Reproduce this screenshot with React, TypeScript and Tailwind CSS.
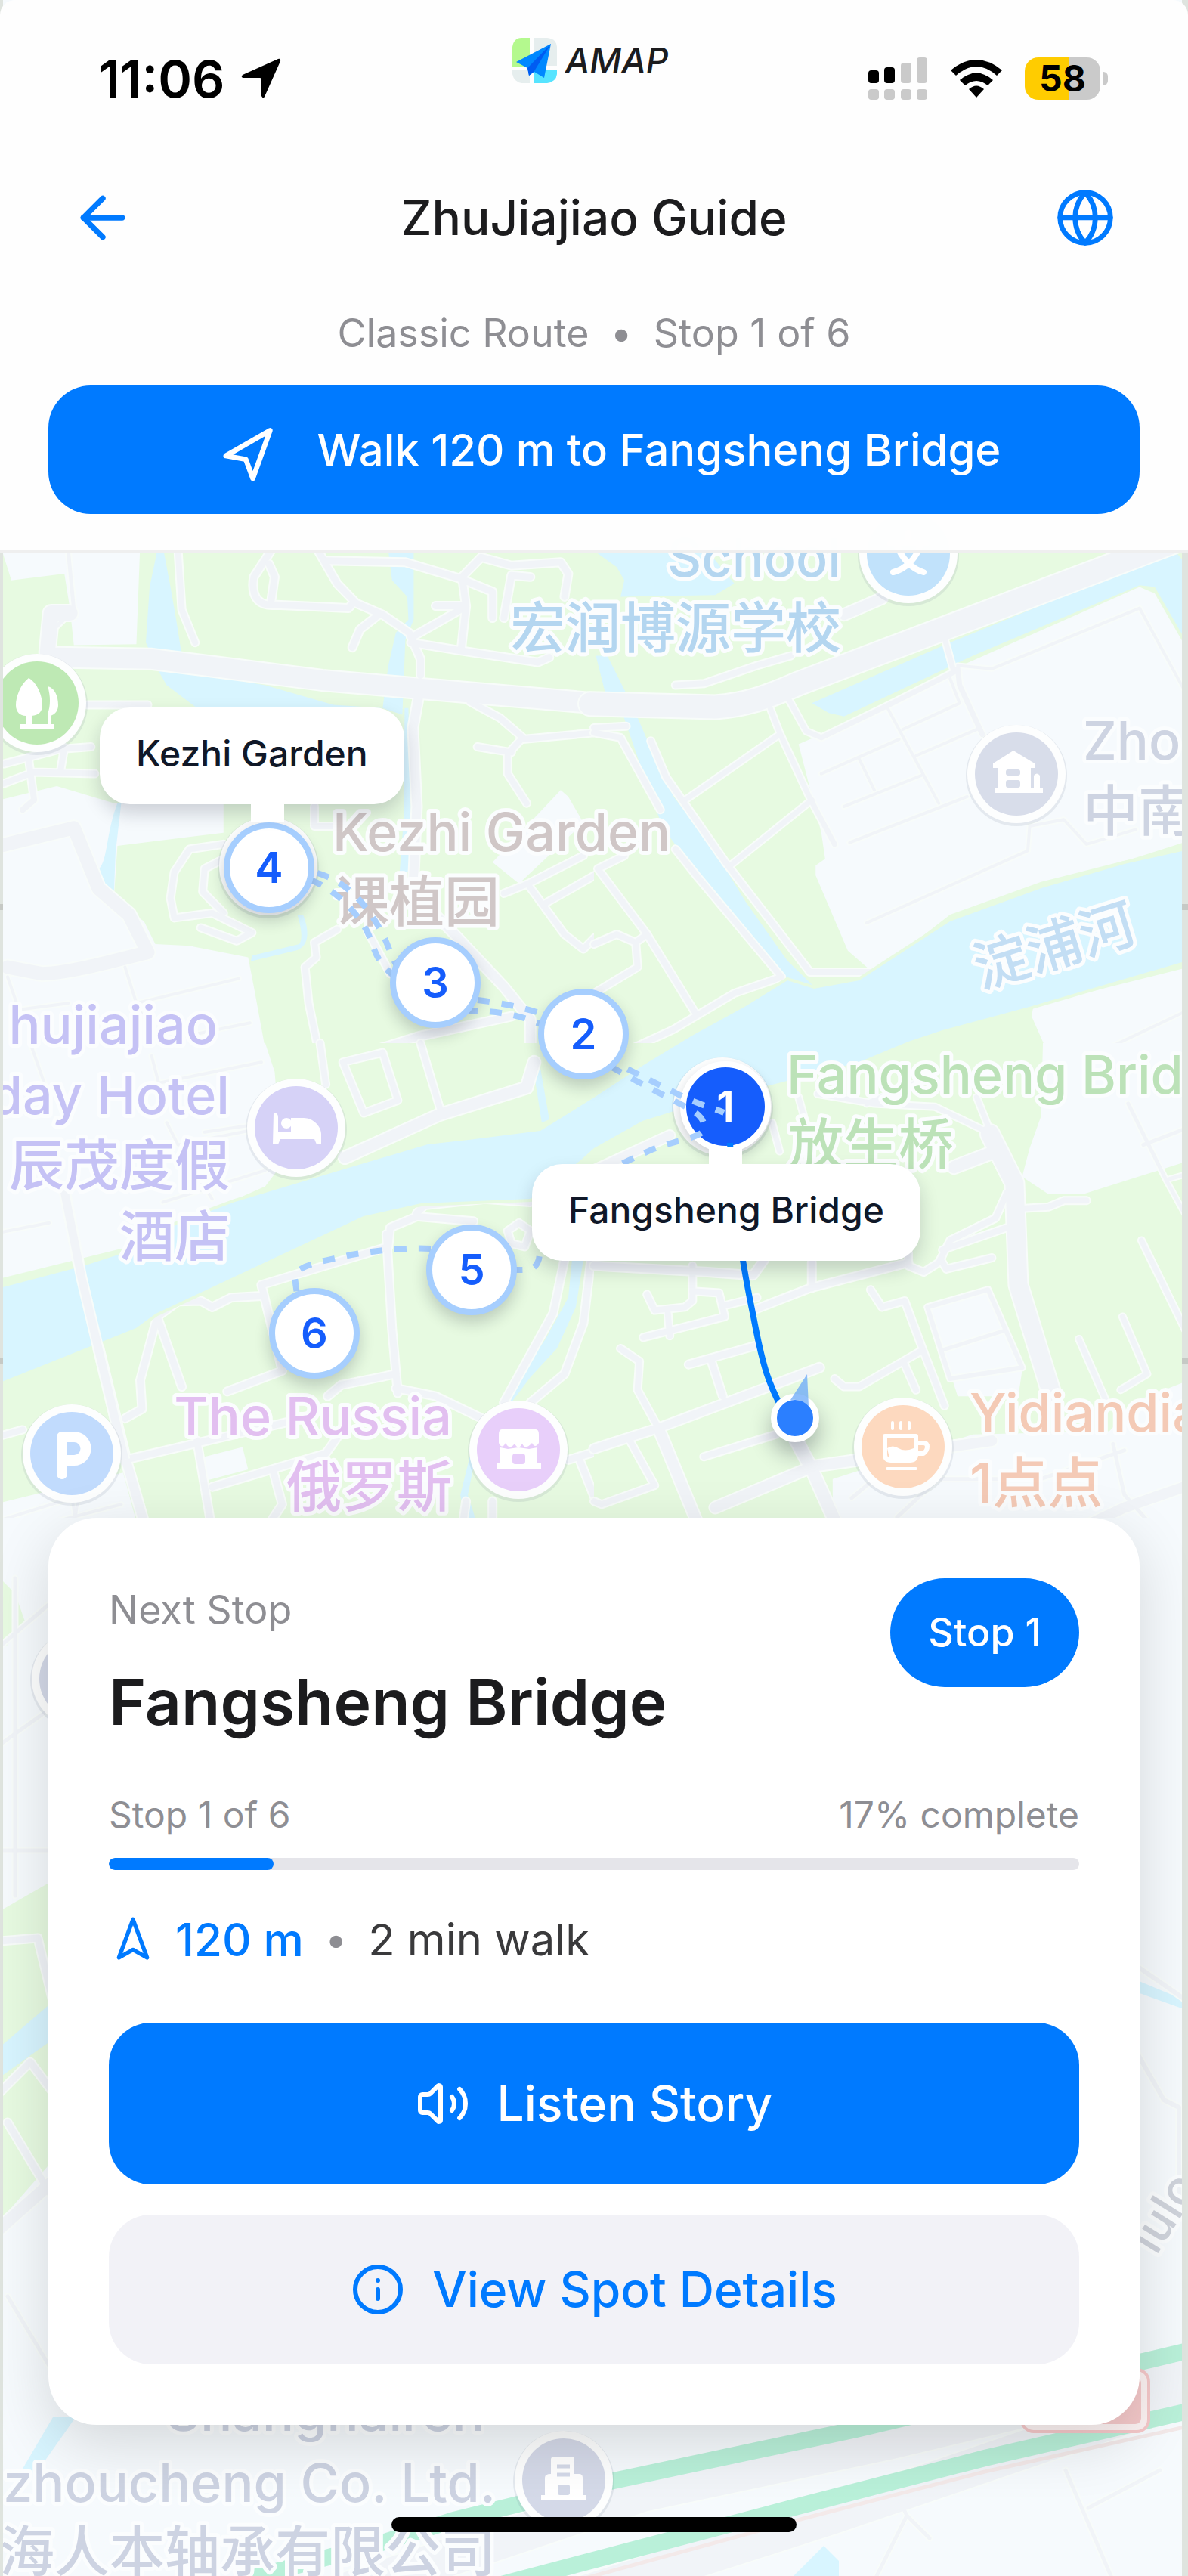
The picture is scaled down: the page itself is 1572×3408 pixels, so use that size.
import { ArrowLeft, Globe, Info, Navigation2, Volume2 } from "lucide-react";
import type { ReactNode } from "react";

type Area = { d: string; fill: string };
type Road = { d: string; w: number };
type Tile = { transform: string; areas: Area[]; roads: Road[] };

const GREEN = "#e7fae1";
const LAND = "#f6fafd";
const WATER = "#d8f5ff";
const ROAD = "#f1f4f8";
const CASING = "#f8fcfa";

const tiles: Tile[] = [
  {
    transform: "translate(0 720) scale(0.5013 0.4337)",
    areas: [
      { d: "M0 0H1570V1570H0Z", fill: GREEN },
      { d: "M0 0H370L360 305L195 308L185 200L170 90L30 110Z", fill: LAND },
      { d: "M0 780L150 738L300 790H590V880L310 920L300 1090L380 1150L410 1220L500 1225L655 1260L670 1350L705 1570H0Z", fill: LAND },
      { d: "M1300 970L1480 750L1500 770L1540 850L1370 1035Z", fill: LAND },
      { d: "M415 20H432L450 130L465 230L478 325L545 400L700 430L880 490L1010 500L520 500L440 430L420 390L385 300L395 130Z", fill: WATER },
      { d: "M1025 20H1092V230L1070 290L1062 520L1010 500L1025 370L1045 270L1078 230L1075 160L1035 110Z", fill: WATER },
      { d: "M1068 500H1078L1085 830L1080 1000H1055L1066 830Z", fill: WATER },
      { d: "M310 790C280 880 285 960 262 990L290 1090H300L305 940L320 790Z", fill: WATER },
      { d: "M785 1130L800 1130C820 1190 812 1225 785 1238L662 1272L665 1255L790 1220C802 1200 792 1160 785 1130Z", fill: WATER },
      { d: "M1170 1175L1190 1180L1350 1370L1410 1450L1425 1570H1395L1390 1450L1330 1370Z", fill: WATER },
    ],
    roads: [
      { d: "M150 345L400 350L540 370L850 415L1570 485", w: 26 },
      { d: "M125 330L135 210L185 210", w: 20 },
      { d: "M0 920L195 865L260 1050L340 1130L390 1245C300 1270 180 1310 110 1310L20 1290", w: 18 },
      { d: "M180 20L195 200L150 250", w: 5 },
      { d: "M470 20L480 200L515 300", w: 8 },
      { d: "M715 20L670 100C660 170 690 190 730 185L920 195L935 175", w: 9 },
      { d: "M710 60L725 100L715 180", w: 9 },
      { d: "M840 20L890 120L940 180L1010 215L1080 270L1110 350V400", w: 9 },
      { d: "M860 50L1070 55L1215 105L1300 145V225", w: 9 },
      { d: "M1000 215L950 260L930 315", w: 9 },
      { d: "M1215 105L1270 40L1350 65L1480 55L1500 90L1490 160", w: 9 },
      { d: "M1400 100L1350 95L1330 225", w: 9 },
      { d: "M1220 100L1230 190L1085 285", w: 9 },
      { d: "M1150 188H1230L1218 315", w: 9 },
      { d: "M1085 300L1218 325L1420 360L1450 345", w: 9 },
      { d: "M1105 465L1090 560L1100 800L1090 1060L1200 1190L1330 1350L1400 1450V1570", w: 12 },
      { d: "M1240 480L1320 530L1380 590L1340 640V700L1390 790", w: 8 },
      { d: "M1260 618L1350 635M1380 595L1568 575", w: 8 },
      { d: "M1330 1065L1395 1035L1540 950", w: 8 },
      { d: "M1395 1040L1490 1190L1540 1235L1570 1200", w: 8 },
      { d: "M1440 1095L1570 1010", w: 8 },
      { d: "M230 490H390M10 670L160 625L240 618", w: 8 },
      { d: "M10 730L90 695L250 700M75 650L90 780L60 810M170 620L160 690", w: 8 },
      { d: "M590 915L500 930L460 1000L450 1080L460 1140L560 1125L665 1185L625 1210L530 1170", w: 8 },
      { d: "M590 960L540 990L535 1060L590 1125", w: 8 },
      { d: "M830 800V860H900", w: 8 },
      { d: "M890 1175L830 1215L835 1260L805 1290L815 1400L845 1570", w: 8 },
      { d: "M920 1568L1110 1500L1350 1440", w: 10 },
      { d: "M20 1320L50 1420L180 1400M330 1290L360 1400L630 1325M360 1400L410 1520L660 1460", w: 4 },
      { d: "M970 1180L1030 1310", w: 8 },
    ],
  },
  {
    transform: "translate(786 720) scale(0.5013 0.4337)",
    areas: [
      { d: "M0 0H1570V1570H0Z", fill: GREEN },
      { d: "M1440 130L1480 150L1570 330V905L1420 960L1180 1030L940 1130L740 1310L670 1240L585 1010V980L610 960L600 880L540 610L600 580L800 480L950 380Z", fill: LAND },
      { d: "M1570 1290L1160 1408L1155 1440L1205 1570H1570Z", fill: LAND },
      { d: "M575 485L940 300L1500 35L1540 30L1570 70V310L1480 130L1440 125L1000 340L660 525L620 515Z", fill: WATER },
      { d: "M0 20H300L370 120L320 155L70 160L80 110L60 70L10 28Z", fill: WATER },
      { d: "M5 340H35L85 455H30Z", fill: WATER },
      { d: "M75 515H110L160 650L210 770L310 920L400 1090L510 1270L590 1360L510 1335L430 1220L290 1040L180 860L130 700Z", fill: WATER },
    ],
    roads: [
      { d: "M-10 487L320 497C400 490 450 470 540 425L1570 -25", w: 30 },
      { d: "M515 475L560 570L600 590L770 495L950 390L925 285", w: 7 },
      { d: "M960 380L965 430L1025 580", w: 7 },
      { d: "M465 500L490 575L570 775L635 915", w: 7 },
      { d: "M490 580L235 785M575 780L360 980", w: 7 },
      { d: "M150 600L190 710L350 975L570 1305H730", w: 8 },
      { d: "M0 575L70 590L175 810M215 930L270 1010L495 1320L370 1370L210 1480L60 1560", w: 8 },
      { d: "M10 990L140 1190L265 1425M10 990L80 950", w: 8 },
      { d: "M0 1220L60 1190L110 1215L115 1290L0 1370M110 1215L140 1190", w: 8 },
      { d: "M0 560L85 555", w: 8 },
      { d: "M215 430L290 425L430 370L520 340", w: 8 },
      { d: "M660 215L760 165", w: 14 },
      { d: "M960 370L1050 380L1440 195L1570 470", w: 4 },
      { d: "M775 500L910 790M600 700L805 595M815 565L965 485L940 410M850 645L1010 565", w: 4 },
      { d: "M700 655L740 750M660 800L865 705M675 910L985 770", w: 4 },
      { d: "M720 1155L1145 935L1150 860L1240 840L1300 915L1430 870", w: 4 },
      { d: "M1370 1530L1570 1420", w: 4 },
    ],
  },
  {
    transform: "translate(0 1380) scale(0.5013 0.4209)",
    areas: [
      { d: "M0 0H1570V1570H0Z", fill: GREEN },
      { d: "M0 0H700L725 90L745 380L700 450L340 640L0 740Z", fill: LAND },
      { d: "M0 1445L325 1350L375 1570H0Z", fill: LAND },
      { d: "M540 1300L640 1270L655 1340L545 1375Z", fill: LAND },
      { d: "M1510 680H1540L1520 830L1470 960L1400 1050L1350 1130L1250 1330L1235 1420L1275 1570H1240L1215 1420L1240 1300L1330 1130L1370 1050L1440 930L1500 800Z", fill: WATER },
      { d: "M1405 60L1425 70L1450 240L1430 250Z", fill: WATER },
    ],
    roads: [
      { d: "M170 460L215 740L330 1300L395 1570", w: 12 },
      { d: "M1020 600L1035 900L1050 1100", w: 9 },
      { d: "M1250 560L1100 545L1030 580L1025 640L690 760L745 1030L600 1095", w: 9 },
      { d: "M1100 535L1120 510L1280 490L1400 500", w: 9 },
      { d: "M690 795L610 800L560 830L530 810L470 812L415 860L370 1060L375 1150L330 1180", w: 9 },
      { d: "M415 860L480 1080", w: 9 },
      { d: "M330 1310L600 1235L800 1180M520 1250L565 1570", w: 9 },
      { d: "M560 1395L860 1290L890 1240M720 1340L745 1450L700 1530", w: 9 },
      { d: "M865 1110L900 1075L1045 1040M1045 1085L1150 1110L1290 1190", w: 9 },
      { d: "M1490 680L1460 850L1330 1130", w: 9 },
      { d: "M1560 680L1540 880L1490 1040L1400 1130", w: 9 },
      { d: "M910 360L1160 225L1390 140L1410 60", w: 15 },
      { d: "M845 0L860 130M1110 0L1165 220", w: 8 },
      { d: "M905 60L1010 30L1050 180L960 220Z", w: 8 },
      { d: "M0 1235L60 1215", w: 8 },
      { d: "M1215 1570L1230 1440M1300 1570V1440M1500 1310L1570 1285M1530 1310L1570 1430", w: 9 },
      { d: "M1340 590L1370 565L1400 590L1385 640L1350 630Z", w: 8 },
      { d: "M80 0L130 170M400 40L420 130M400 130L690 60M0 595L130 565M540 280L650 260", w: 4 },
      { d: "M0 1500L190 1430L210 1570M30 1540L320 1450M200 1480L210 1400", w: 4 },
      { d: "M440 250L470 320L700 265M480 340L560 490M430 500L700 400", w: 4 },
    ],
  },
  {
    transform: "translate(786 1380) scale(0.5013 0.4209)",
    areas: [
      { d: "M0 0H1570V1570H0Z", fill: GREEN },
      { d: "M1185 0H1570V370L1290 475H1200L1130 420L1150 330L1180 230Z", fill: LAND },
      { d: "M885 830L1040 770L1090 900L1130 1030L1120 1110H960Z", fill: LAND },
      { d: "M630 1370L1000 1230L1360 1220L1440 1120L1570 1060V1570H630Z", fill: LAND },
    ],
    roads: [
      { d: "M1045 285L1110 440L1120 760L1210 1110", w: 24 },
      { d: "M950 390L1060 340", w: 16 },
      { d: "M1130 520L1200 515L1240 495H1300", w: 8 },
      { d: "M1010 170L1050 290M470 250L490 340M540 170L570 300", w: 7 },
      { d: "M590 160L740 190L900 200L1040 280M720 190L860 120", w: 7 },
      { d: "M1090 470L1060 550L940 620L910 690L870 720L830 700V660", w: 8 },
      { d: "M1090 580L920 650M1050 675L930 710L915 680", w: 8 },
      { d: "M430 835L570 770L830 690M575 770V690", w: 9 },
      { d: "M260 700V810L240 830L160 840L140 790", w: 8 },
      { d: "M260 780L330 785L345 860L130 925M195 850L200 920M345 825L430 800", w: 8 },
      { d: "M730 775L760 830L820 810L870 970L925 1140", w: 8 },
      { d: "M635 1055L660 1080H700L860 970M820 1010L850 1090", w: 8 },
      { d: "M880 830L1040 775L1130 1020L940 1055Z", w: 6 },
      { d: "M920 965L1080 905", w: 5 },
      { d: "M250 1010L430 950M310 1000L340 1110", w: 9 },
      { d: "M70 960L120 1000L115 1090L170 1210", w: 8 },
      { d: "M0 1275L170 1210L595 1020", w: 11 },
      { d: "M170 1210L270 1500", w: 14 },
      { d: "M290 1300L480 1230M90 1240L160 1390L20 1450L0 1440", w: 8 },
      { d: "M530 1240L575 1340L635 1500", w: 16 },
      { d: "M320 1460L580 1330L760 1300L1050 1250", w: 14 },
      { d: "M1240 1550L1400 1460L1570 1390", w: 14 },
      { d: "M1445 620L1560 900M1395 860L1460 1040L1390 1090M1280 930L1350 1120", w: 7 },
      { d: "M1370 1260L1400 1420L1460 1500M680 1430L740 1370H1180L1400 1280M800 1490L900 1380", w: 5 },
      { d: "M1450 320L1570 265M1410 190L1510 430L1570 410M1510 430L1570 560", w: 5 },
      { d: "M0 400L200 290", w: 12 },
      { d: "M0 700L300 720L420 730L450 680", w: 10 },
    ],
  },
  {
    transform: "translate(0 2008)",
    areas: [
      { d: "M0 0H1572V1400H0Z", fill: LAND },
      { d: "M0 80L20 100L34 140L8 170H0Z", fill: GREEN },
      { d: "M0 520L70 480V850L0 930Z", fill: GREEN },
      { d: "M0 700L70 640V690L0 740Z", fill: WATER },
      { d: "M1500 610L1572 640V652L1500 626Z", fill: WATER },
      { d: "M70 1190L100 1190L40 1275L20 1275Z", fill: WATER },
      { d: "M1090 1360L1110 1380V1400H1050Z", fill: WATER },
    ],
    roads: [
      { d: "M0 170L70 110M0 300L70 250M0 440H70M20 80V500", w: 5 },
      { d: "M0 560L50 556L70 640M0 760L40 720L70 760M10 800L70 900", w: 9 },
      { d: "M0 940L90 860", w: 16 },
      { d: "M1500 590L1572 640M1500 700L1540 770L1560 780V900", w: 6 },
      { d: "M10 1030L70 1130", w: 5 },
      { d: "M430 1430L850 1290L1180 1220L1600 1120M600 1480L1100 1320L1600 1150", w: 50 },
      { d: "M1410 1260L1470 1400M1440 1310L1535 1260M1180 1280L1200 1320L1160 1400M1200 1320L1230 1350", w: 5 },
    ],
  },
];

const RIVER =
  "M1564 1126L1488 1143L1378 1175L1257 1219L1137 1297L1077 1308L1042 1297L987 1331L916 1370L850 1410L786 1452L715 1496L620 1508L566 1514L451 1548L311 1590L241 1616L175 1654L110 1675L0 1704V1829L180 1757L206 1738L481 1609L557 1592L702 1586L767 1536L786 1519L850 1483L911 1464L1022 1435L1057 1426L1137 1405L1202 1378L1247 1363L1362 1332L1564 1273Z";

function MapTile({ tile }: { tile: Tile }) {
  return (
    <g transform={tile.transform} fill="none" strokeLinecap="round" strokeLinejoin="round">
      {tile.areas.map((a) => (
        <path key={a.d} d={a.d} fill={a.fill} />
      ))}
      {tile.roads.map((r) => (
        <path key={r.d} d={r.d} stroke={CASING} strokeWidth={r.w + 4} vectorEffect="non-scaling-stroke" />
      ))}
      {tile.roads.map((r) => (
        <path key={r.d} d={r.d} stroke={ROAD} strokeWidth={r.w} vectorEffect="non-scaling-stroke" />
      ))}
    </g>
  );
}

function Poi({ x, y, fill, children }: { x: number; y: number; fill: string; children?: ReactNode }) {
  return (
    <g transform={`translate(${x} ${y})`}>
      <circle r="67" cy="2" fill="#64748b" opacity="0.12" />
      <circle r="65" fill="#fdfefe" />
      <circle r="55" fill={fill} />
      {children}
    </g>
  );
}

type LabelProps = { x: number; y: number; fill: string; end?: boolean; rotate?: number; size?: number; children: string };

function MapLabel({ x, y, fill, end = false, rotate = 0, size = 70, children }: LabelProps) {
  return (
    <text
      x={x}
      y={y}
      fill={fill}
      fontSize={size}
      fontWeight="500"
      textAnchor={end ? "end" : "start"}
      transform={`rotate(${rotate} ${x} ${y})`}
      stroke="#fbfdfe"
      strokeWidth="10"
      strokeLinejoin="round"
      paintOrder="stroke"
    >
      {children}
    </text>
  );
}

function BaseMap() {
  return (
    <svg
      className="absolute inset-0 h-full w-full font-[Inter,'Noto_Sans_CJK_SC',sans-serif]"
      viewBox="0 0 1572 3408"
      preserveAspectRatio="xMidYMin slice"
      role="img"
      aria-label="Map of Zhujiajiao"
    >
      <rect width="1572" height="3408" fill={LAND} />
      {tiles.map((t) => (
        <MapTile key={t.transform} tile={t} />
      ))}
      <path d={RIVER} fill={WATER} stroke={GREEN} strokeWidth="8" />
      <path d={RIVER} fill={WATER} />
      <path d="M85 1575L108 1691L165 1931" fill="none" stroke={CASING} strokeWidth="15" />
      <path d="M85 1575L108 1691L165 1931" fill="none" stroke={ROAD} strokeWidth="11" />

      <g fill="none" strokeWidth="22" stroke="#b9f0d9">
        <path d="M320 3414L512 3362L600 3334L812 3282L1133 3214L1572 3110" />
        <path d="M660 3420L1063 3314L1303 3252L1572 3190" />
      </g>
      <path d="M690 3434L1063 3332L1303 3270L1572 3210" fill="none" stroke="#f3e9e9" strokeWidth="5" />
      <rect x="1352" y="3135" width="168" height="82" rx="16" fill="#fdf3f3" stroke="#f6c9ca" strokeWidth="4" />
      <rect x="1362" y="3145" width="148" height="62" rx="8" fill="#f5c9ca" />

      <Poi x={49} y={930} fill="#bee9b4">
        <path
          d="M-11-33C-22-25-28-8-28 3C-28 12-22 17-15 17V28H-23V34H23V28H18V17C24 15 28 10 28 3C28-10 23-20 14-22C18-10 18 5 14 14V28H-7V17C2 16 7 12 7 3C7-10 0-27-11-33Z"
          fill="#fff"
        />
      </Poi>
      <Poi x={1202} y={733} fill="#c1e2fb">
        <path d="M-24-14H24M0-28V-14M16-14C12 5-4 20-20 24M-16-14C-10 5 5 20 20 24" fill="none" stroke="#fff" strokeWidth="8" strokeLinecap="round" />
      </Poi>
      <Poi x={1345} y={1024} fill="#d8ddea">
        <path d="M-4-31L24-14V-8H19V18H23V2Q27-3 31 2V18H35V25H-29V18H-24V-8H-31V-14Z" fill="#fff" />
        <rect x="-14" y="-6" width="19" height="8" rx="3" fill="#d8ddea" />
        <rect x="-14" y="8" width="19" height="10" rx="3" fill="#d8ddea" />
      </Poi>
      <Poi x={392} y={1492} fill="#d6d2f7">
        <g fill="#fff">
          <path d="M-30-20Q-24-20-24-14V5H-7V-13H10C22-13 33-2 33 8V22H27L24 15H-21L-24 22H-31Z" />
          <circle cx="-13" cy="-6" r="7" />
        </g>
      </Poi>
      <Poi x={95} y={1923} fill="#c1dbfd">
        <path d="M-13 27V-22H3A14 14 0 0 1 3 9H-13" fill="none" stroke="#fff" strokeWidth="14" strokeLinecap="round" strokeLinejoin="round" />
      </Poi>
      <Poi x={686} y={1918} fill="#e8cffa">
        <g fill="#fff">
          <path d="M-22-27H23Q27-27 27-20V-9Q22-1 18-9Q9 1 5-8Q0 1-5-8Q-12 1-17-9Q-22 0-26-9V-20Q-26-27-22-27Z" />
          <path d="M-24-3L-14-1L0-3L14-1L25-3V18H30V25H-29V18H-24Z" />
          <rect x="-8" y="5" width="17" height="14" rx="4" fill="#e8cffa" />
        </g>
      </Poi>
      <Poi x={1195} y={1914} fill="#fdd9bf">
        <g fill="none" stroke="#fff" strokeWidth="6" strokeLinecap="round" strokeLinejoin="round">
          <path d="M-24-14H17V10Q17 18 9 18H-16Q-24 18-24 10ZM17-5H27Q32-5 32 0T27 9H17" />
          <path d="M-21 2Q-14-3-6 2T14 2V15H-18Z" fill="#fff" stroke="none" />
          <path d="M-14-32V-24M-3-32V-24M8-32V-24M-21 29H17" strokeWidth="4" />
        </g>
      </Poi>
      <Poi x={107} y={2221} fill="#d4d9e8" />
      <Poi x={746} y={3281} fill="#d4d9e8">
        <g fill="#fff">
          <path d="M-17-27Q-17-31-13-31H11Q14-31 14-27V-8H20Q25-8 25-3V20H29V27H-30V20H-25V-3Q-25-8-17-8Z" />
          <path d="M-9-18H8M-9-7H8" stroke="#d4d9e8" strokeWidth="5" />
          <rect x="-8" y="6" width="16" height="14" rx="3" fill="#d4d9e8" />
        </g>
      </Poi>
      <Poi x={355} y={1146} fill="#e0d8d8" />
      <Poi x={956} y={1464} fill="#bce2b8" />

      <MapLabel x={1113} y={763} end fill="#b4d6f0">School</MapLabel>
      <MapLabel x={1113} y={857} end size={73} fill="#b4d6f0">宏润博源学校</MapLabel>
      <MapLabel x={440} y={1126} fill="#d0c7c7">Kezhi Garden</MapLabel>
      <MapLabel x={442} y={1219} size={73} fill="#d0c7c7">课植园</MapLabel>
      <MapLabel x={1433} y={1005} fill="#ced4e2">Zho</MapLabel>
      <MapLabel x={1433} y={1099} size={73} fill="#ced4e2">中南</MapLabel>
      <MapLabel x={1298} y={1308} rotate={-17} size={73} fill="#c3def4">淀浦河</MapLabel>
      <MapLabel x={1041} y={1447} fill="#bce2b8">Fangsheng Brid</MapLabel>
      <MapLabel x={1043} y={1540} size={73} fill="#bce2b8">放生桥</MapLabel>
      <MapLabel x={288} y={1381} end fill="#c5c2f5">hujiajiao</MapLabel>
      <MapLabel x={304} y={1474} end fill="#c5c2f5">day Hotel</MapLabel>
      <MapLabel x={304} y={1568} end size={73} fill="#c5c2f5">辰茂度假</MapLabel>
      <MapLabel x={304} y={1662} end size={73} fill="#c5c2f5">酒店</MapLabel>
      <MapLabel x={598} y={1899} end fill="#e2bff0">The Russia</MapLabel>
      <MapLabel x={598} y={1993} end size={73} fill="#e2bff0">俄罗斯</MapLabel>
      <MapLabel x={1283} y={1894} fill="#f4cab6">Yidiandia</MapLabel>
      <MapLabel x={1283} y={1988} size={73} fill="#f4cab6">1点点</MapLabel>
      <MapLabel x={1530} y={2985} rotate={-58} size={64} fill="#cfd3db">iulo</MapLabel>
      <MapLabel x={641} y={3216} end fill="#cdd3e2">Shanghairen</MapLabel>
      <MapLabel x={656} y={3310} end fill="#cdd3e2">zhoucheng Co. Ltd.</MapLabel>
      <MapLabel x={656} y={3402} end size={73} fill="#cdd3e2">海人本轴承有限公司</MapLabel>

      <g fill="#dfe4df">
        <rect width="4" height="3408" />
        <rect x="1564" width="8" height="3408" />
        <g fill="#c6c9c5">
          <rect y="1196" width="4" height="8" />
          <rect x="1564" y="1196" width="8" height="8" />
          <rect y="1796" width="4" height="8" />
          <rect x="1564" y="1796" width="8" height="8" />
        </g>
      </g>
    </svg>
  );
}

function Route() {
  return (
    <svg className="pointer-events-none absolute inset-0 h-full w-full" viewBox="0 0 1572 3408" preserveAspectRatio="xMidYMin slice" aria-hidden="true" fill="none">
      <g stroke="#a6cefe" strokeWidth="8" strokeDasharray="16 16">
        <path d="M420 1155C458 1166 484 1196 501 1226S514 1262 530 1285" />
        <path d="M411 1164C450 1180 478 1215 487 1235S496 1270 520 1290" />
        <path d="M632 1323C665 1327 700 1334 730 1346" />
        <path d="M616 1337C660 1337 690 1343 722 1358" />
        <path d="M802 1400L838 1418L894 1446C925 1462 945 1466 958 1472" />
        <path d="M808 1411L842 1430L899 1460C920 1470 932 1478 932 1492S890 1508 858 1523C810 1545 760 1570 735 1600S718 1640 713 1666C708 1682 698 1680 676 1680" />
        <path d="M570 1652C530 1650 490 1656 465 1660C430 1668 390 1674 390 1690L393 1712" />
      </g>
      <path d="M966 1512C972 1610 984 1680 997 1742C1010 1812 1018 1832 1036 1866" stroke="#007aff" strokeWidth="8" />
    </svg>
  );
}

const nextStops = [
  { n: 2, place: "left-[712px] top-[1308px]" },
  { n: 3, place: "left-[516px] top-[1240px]" },
  { n: 4, place: "left-[296px] top-[1088px]" },
  { n: 5, place: "left-[564px] top-[1620px]" },
  { n: 6, place: "left-[356px] top-[1704px]" },
];

function Callout({ place, children }: { place: string; children: ReactNode }) {
  return (
    <div className={`absolute flex h-32 items-center rounded-[40px] bg-white px-12 pb-1.5 text-5xl font-medium whitespace-nowrap text-[#101828] shadow-[0_12px_24px_rgba(15,23,42,0.18)] ${place}`}>
      {children}
    </div>
  );
}

function MapLayer() {
  return (
    <div className="absolute inset-0 overflow-hidden">
      <BaseMap />
      <button type="button" aria-label="Stop 1" className="absolute top-[1404px] left-[900px] size-30 rounded-full border-8 border-white bg-[#155dfc] text-[56px] leading-none font-semibold text-white shadow-[0_8px_16px_rgba(15,23,42,0.2)]">
        1
      </button>
      <Route />
      {nextStops.map((s) => (
        <button
          key={s.n}
          type="button"
          aria-label={`Stop ${s.n}`}
          className={`absolute size-30 rounded-full border-8 border-[#a6cefe] bg-white text-[56px] leading-none font-semibold text-[#155dfc] shadow-[0_10px_20px_rgba(15,23,42,0.2)] ${s.place}`}
        >
          {s.n}
        </button>
      ))}
      <Callout place="left-[132px] top-[936px]">Kezhi Garden</Callout>
      <div className="absolute top-[1060px] left-[332px] h-7 w-11 bg-white" />
      <Callout place="left-[704px] top-[1540px]">Fangsheng Bridge</Callout>
      <div className="absolute top-[1518px] left-[938px] h-7 w-11 bg-white" />
      <div className="absolute top-[1844px] left-[1020px] size-16 rounded-full border-8 border-white bg-[#2b7fff] shadow-[0_16px_28px_rgba(15,23,42,0.3)]" />
      <svg className="absolute top-[1816px] left-[1040px] h-12 w-8" viewBox="0 0 32 48" aria-hidden="true">
        <path d="M28 2L6 36Q20 34 30 44Z" fill="#6aa8f8" opacity="0.75" />
      </svg>
    </div>
  );
}

function StatusBar() {
  return (
    <div className="grid h-[208px] grid-cols-3 items-center pr-[106px] pl-[94px]">
      <div className="ml-9 flex items-center gap-5 text-[68px] leading-none font-semibold text-black">
        11:06
        <svg className="size-[54px]" viewBox="0 0 54 54" aria-label="Location in use">
          <path d="M50 1Q54 0 53 4L32 51Q30 54 28 50V28Q28 26 26 26H4Q0 25 3 22Z" fill="#000" />
        </svg>
      </div>
      <div className="mt-12 flex h-16 items-center gap-2 self-start justify-self-center text-[46px] font-medium text-[#1c1c1e] italic">
        <svg className="size-16" viewBox="0 0 64 64" aria-hidden="true">
          <path d="M2 42V14Q4 2 14 2H25V40H2Z" fill="#b4f98e" />
          <path d="M31 2H48Q60 3 61 14V39H31Z" fill="#e6eeee" />
          <path d="M2 44H25V62H14Q4 60 2 50Z" fill="#e6eeee" />
          <path d="M31 44H61V50Q60 60 48 62H31Z" fill="#57e4ff" />
          <path d="M53 10L7 34L22 42L24 52L31 47L44 55Z" fill="#0088ff" />
          <path d="M53 10L22 42L24 52L31 46Z" fill="#005cf2" />
        </svg>
        AMAP
      </div>
      <div className="flex items-center gap-[30px] justify-self-end">
        <svg className="h-14 w-20" viewBox="0 0 80 56" aria-label="Cellular signal">
          <g fill="#cacaca">
            <rect x="44" y="7" width="14" height="27" rx="4" />
            <rect x="65" y="0" width="14" height="34" rx="4" />
            <rect x="1" y="42" width="14" height="14" rx="4" />
            <rect x="22" y="42" width="14" height="14" rx="4" />
            <rect x="44" y="42" width="14" height="14" rx="4" />
            <rect x="65" y="42" width="14" height="14" rx="4" />
          </g>
          <rect x="1" y="17" width="14" height="17" rx="4" />
          <rect x="22" y="13" width="14" height="21" rx="4" />
        </svg>
        <svg className="h-[50px] w-[68px]" viewBox="0 0 68 50" aria-label="Wi-Fi">
          <path d="M0 14Q34-14 68 14L61 21Q34-3 7 21Z" />
          <path d="M12 27Q34 8 56 27L49 34Q34 22 19 34Z" />
          <path d="M24 39Q34 30 44 39L34 50Z" />
        </svg>
        <div className="flex items-center gap-1">
          <div className="flex h-14 w-25 items-center justify-center rounded-[18px] bg-linear-to-r from-[#ffcc00] from-58% to-[#cacaca] to-58% text-5xl leading-none font-bold text-black">
            58
          </div>
          <div className="h-[18px] w-1.5 rounded-r-full bg-[#cacaca]" />
        </div>
      </div>
    </div>
  );
}

export default function App() {
  const progress = 17;
  return (
    <div className="relative flex min-h-screen flex-col overflow-hidden bg-[#f6fafd] font-[Inter,'Noto_Sans_CJK_SC',sans-serif]">
      <MapLayer />
      <header className="relative rounded-t-[20px] border-b-4 border-[#efefef] bg-[#fefefe]/98 pb-12">
        <StatusBar />
        <nav className="flex h-40 items-center justify-between px-16 text-[#007aff]">
          <button type="button" aria-label="Back" className="flex size-36 items-center justify-center">
            <ArrowLeft className="size-22" strokeWidth={2} />
          </button>
          <h1 className="text-[64px] leading-none font-medium text-[#1c1c1e]">ZhuJiajiao Guide</h1>
          <button type="button" aria-label="Change language" className="flex size-36 items-center justify-center">
            <Globe className="size-20" strokeWidth={2} />
          </button>
        </nav>
        <p className="mt-8 flex justify-center gap-7 text-[52px] leading-[82px] text-[#8e8e93]">
          <span>Classic Route</span>
          <span>•</span>
          <span>Stop 1 of 6</span>
        </p>
        <div className="mt-7 px-16">
          <button type="button" className="flex h-[170px] w-full items-center justify-center gap-11 rounded-[56px] bg-[#007aff] pl-12 text-[58px] font-medium text-white">
            <Navigation2 className="size-20 rotate-40" strokeWidth={2} />
            Walk 120 m to Fangsheng Bridge
          </button>
        </div>
      </header>

      <div className="pointer-events-none min-h-[1276px] flex-1" />

      <main className="relative mx-16 rounded-[64px] bg-white p-20 shadow-[0_24px_80px_rgba(0,0,0,0.14)]">
        <div className="flex items-start justify-between">
          <div>
            <p className="text-[52px] leading-[84px] text-[#8e8e93]">Next Stop</p>
            <h2 className="mt-6 text-[84px] leading-[112px] font-semibold text-[#1c1c1e]">Fangsheng Bridge</h2>
          </div>
          <span className="flex h-36 items-center rounded-full bg-[#007aff] px-[50px] text-[52px] font-medium text-white">Stop 1</span>
        </div>
        <div className="mt-14 flex justify-between text-5xl leading-[74px] text-[#8e8e93]">
          <span id="progress-label">Stop 1 of 6</span>
          <span>17% complete</span>
        </div>
        <div role="progressbar" aria-labelledby="progress-label" aria-valuenow={progress} className="mt-5 h-4 overflow-hidden rounded-full bg-[#e5e5ea]">
          <div className="h-full rounded-full bg-[#007aff]" style={{ width: `${progress}%` }} />
        </div>
        <div className="mt-13 flex h-20 items-center text-[58px] text-[#3a3a3c]">
          <Navigation2 className="size-16 text-[#007aff]" strokeWidth={2} />
          <span className="ml-6 text-6xl font-medium text-[#007aff]">120 m</span>
          <span className="mx-7 text-[52px] text-[#8e8e93]">•</span>
          <span>2 min walk</span>
        </div>
        <button type="button" className="mt-[70px] flex h-[214px] w-full items-center justify-center gap-9 rounded-[56px] bg-[#007aff] text-[64px] font-medium text-white">
          <Volume2 className="size-18" strokeWidth={2} />
          Listen Story
        </button>
        <button type="button" className="mt-10 flex h-[198px] w-full items-center justify-center gap-9 rounded-[56px] bg-[#f2f2f7] text-[64px] font-medium text-[#007aff]">
          <Info className="size-18" strokeWidth={2} />
          View Spot Details
        </button>
      </main>

      <div className="relative mx-auto mt-[122px] mb-[58px] h-5 w-[536px] rounded-full bg-black" />
    </div>
  );
}
